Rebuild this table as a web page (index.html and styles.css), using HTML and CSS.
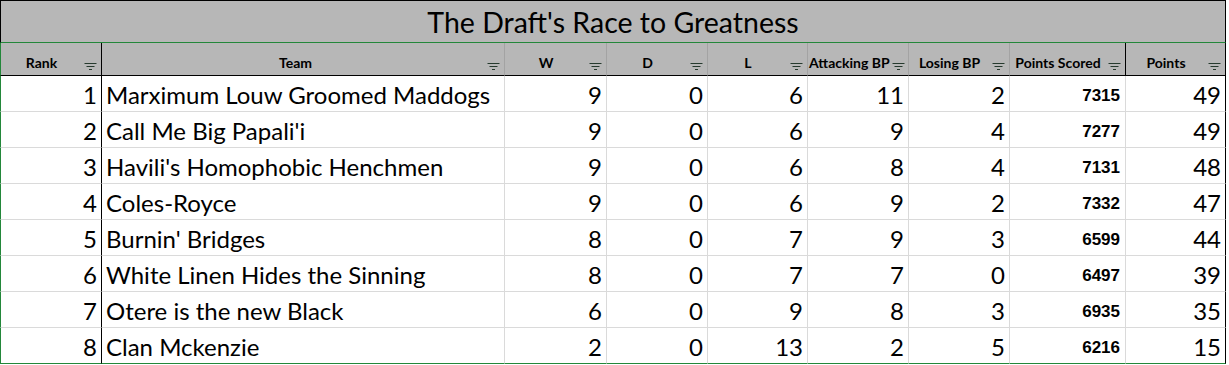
FILE: index.html
```html
<!DOCTYPE html>
<html>
<head>
<meta charset="utf-8">
<link rel="stylesheet" href="styles.css">
</head>
<body>
<div class="sheet">
  <div class="title">The Draft's Race to Greatness</div>

  <div class="hd c-rank"><span class="lbl">Rank</span><svg class="flt" viewBox="0 0 13 8"><path d="M0.5 0.5h12M2.5 3.5h8M5 6.5h3"/></svg></div>
  <div class="hd c-team"><span class="lbl">Team</span><svg class="flt" viewBox="0 0 13 8"><path d="M0.5 0.5h12M2.5 3.5h8M5 6.5h3"/></svg></div>
  <div class="hd"><span class="lbl">W</span><svg class="flt" viewBox="0 0 13 8"><path d="M0.5 0.5h12M2.5 3.5h8M5 6.5h3"/></svg></div>
  <div class="hd"><span class="lbl">D</span><svg class="flt" viewBox="0 0 13 8"><path d="M0.5 0.5h12M2.5 3.5h8M5 6.5h3"/></svg></div>
  <div class="hd"><span class="lbl">L</span><svg class="flt" viewBox="0 0 13 8"><path d="M0.5 0.5h12M2.5 3.5h8M5 6.5h3"/></svg></div>
  <div class="hd tight"><span class="lbl">Attacking BP</span><svg class="flt" viewBox="0 0 13 8"><path d="M0.5 0.5h12M2.5 3.5h8M5 6.5h3"/></svg></div>
  <div class="hd"><span class="lbl">Losing BP</span><svg class="flt" viewBox="0 0 13 8"><path d="M0.5 0.5h12M2.5 3.5h8M5 6.5h3"/></svg></div>
  <div class="hd c-ps"><span class="lbl">Points Scored</span><svg class="flt" viewBox="0 0 13 8"><path d="M0.5 0.5h12M2.5 3.5h8M5 6.5h3"/></svg></div>
  <div class="hd c-pts"><span class="lbl">Points</span><svg class="flt" viewBox="0 0 13 8"><path d="M0.5 0.5h12M2.5 3.5h8M5 6.5h3"/></svg></div>

  <div class="td c-rank num">1</div><div class="td c-team">Marximum Louw Groomed Maddogs</div><div class="td num">9</div><div class="td num">0</div><div class="td num">6</div><div class="td num">11</div><div class="td num">2</div><div class="td c-ps bold">7315</div><div class="td c-pts num">49</div>
  <div class="td c-rank num">2</div><div class="td c-team">Call Me Big Papali'i</div><div class="td num">9</div><div class="td num">0</div><div class="td num">6</div><div class="td num">9</div><div class="td num">4</div><div class="td c-ps bold">7277</div><div class="td c-pts num">49</div>
  <div class="td c-rank num">3</div><div class="td c-team">Havili's Homophobic Henchmen</div><div class="td num">9</div><div class="td num">0</div><div class="td num">6</div><div class="td num">8</div><div class="td num">4</div><div class="td c-ps bold">7131</div><div class="td c-pts num">48</div>
  <div class="td c-rank num">4</div><div class="td c-team">Coles-Royce</div><div class="td num">9</div><div class="td num">0</div><div class="td num">6</div><div class="td num">9</div><div class="td num">2</div><div class="td c-ps bold">7332</div><div class="td c-pts num">47</div>
  <div class="td c-rank num">5</div><div class="td c-team">Burnin' Bridges</div><div class="td num">8</div><div class="td num">0</div><div class="td num">7</div><div class="td num">9</div><div class="td num">3</div><div class="td c-ps bold">6599</div><div class="td c-pts num">44</div>
  <div class="td c-rank num">6</div><div class="td c-team">White Linen Hides the Sinning</div><div class="td num">8</div><div class="td num">0</div><div class="td num">7</div><div class="td num">7</div><div class="td num">0</div><div class="td c-ps bold">6497</div><div class="td c-pts num">39</div>
  <div class="td c-rank num">7</div><div class="td c-team">Otere is the new Black</div><div class="td num">6</div><div class="td num">0</div><div class="td num">9</div><div class="td num">8</div><div class="td num">3</div><div class="td c-ps bold">6935</div><div class="td c-pts num">35</div>
  <div class="td c-rank num last">8</div><div class="td c-team last">Clan Mckenzie</div><div class="td num last">2</div><div class="td num last">0</div><div class="td num last">13</div><div class="td num last">2</div><div class="td num last">5</div><div class="td c-ps bold last">6216</div><div class="td c-pts num last">15</div>
</div>
</body>
</html>
```

FILE: styles.css
```css
* { box-sizing: border-box; }
html, body { margin: 0; padding: 0; background: #ffffff; }
.sheet {
  display: grid;
  grid-template-columns: 102px 403px 102px 101px 100px 101px 101px 116px 100px;
  grid-template-rows: 43px 33px repeat(8, 36px);
  width: 1226px;
  font-family: "Lato", "Liberation Sans", sans-serif;
  color: #000;
}
.title {
  grid-column: 1 / -1;
  background: #b7b7b7;
  border: 1px solid #000;
  border-bottom: 1px solid #23873a;
  display: flex;
  align-items: center;
  justify-content: center;
  font-size: 28.5px;
  padding-top: 1px;
}
.hd {
  background: #b7b7b7;
  border-right: 1px solid #a3a3a3;
  border-bottom: 1px solid #000;
  display: flex;
  align-items: flex-end;
  padding-bottom: 4px;
  font-weight: 700;
  font-size: 14px;
}
.hd .lbl { flex: 1; text-align: center; white-space: nowrap; }
.hd.tight .lbl { text-align: left; padding-left: 1px; }
.flt {
  width: 13px;
  height: 8px;
  margin: 0 4px 0 2px;
  flex: none;
  stroke: #263a2e;
  stroke-width: 1;
  fill: none;
}
.td {
  border-right: 1px solid #dadada;
  border-bottom: 1px solid #dadada;
  display: flex;
  align-items: flex-end;
  font-size: 24px;
  padding: 0 4px 2px 4px;
  white-space: nowrap;
}
.num { justify-content: flex-end; }
.bold {
  justify-content: flex-end;
  font-family: "Liberation Sans", Arial, sans-serif;
  font-weight: 700;
  font-size: 17px;
  padding-bottom: 5px;
  padding-right: 5px;
}
.c-rank { border-left: 1px solid #23873a; border-right: 1px solid #000; }
.hd.c-rank { border-right: 1px solid #000; }
.c-team { padding-left: 4px; }
.hd.c-ps { border-right: 1px solid #000; }
.c-pts { border-right: 1px solid #000; }
.hd.c-pts { border-right: 1px solid #000; }
.td.last { border-bottom: 1px solid #23873a; }
```
